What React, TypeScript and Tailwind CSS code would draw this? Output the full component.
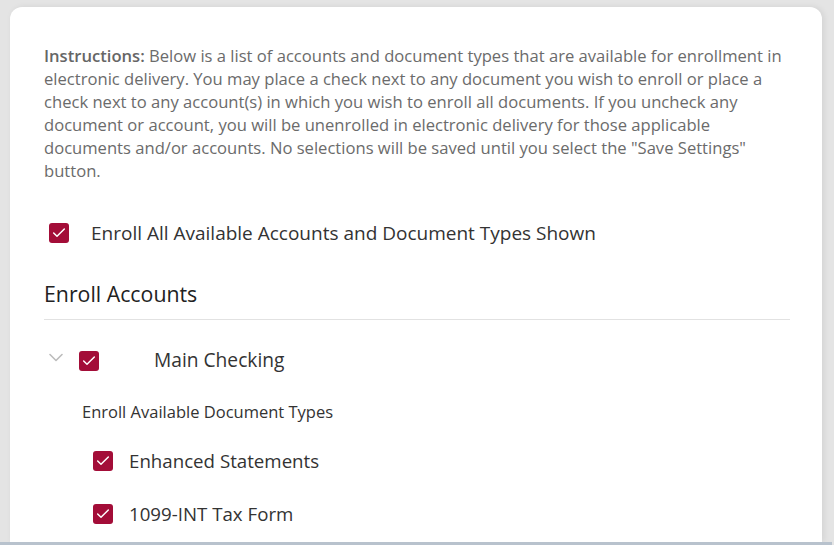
import { Check } from "lucide-react";

function Box() {
  return (
    <span className="flex h-5 w-5 shrink-0 items-center justify-center rounded-[3px] bg-[#a30d38]">
      <Check className="h-4 w-4 text-white" strokeWidth={2.2} />
    </span>
  );
}

export default function App() {
  return (
    <div className="h-[545px] overflow-hidden bg-[#e4e4e4] pl-[10px] pr-[12px] pt-[7px] font-['Open_Sans',sans-serif]">
      <div className="h-[535px] overflow-hidden rounded-t-[12px] bg-white pl-[34px] pr-[32px] pt-[37px] shadow-[2px_0_6px_rgba(0,0,0,0.08)]">
        <p className="text-[16.6px] leading-[23px] text-[#6b6b6b]">
          <span className="font-semibold text-[#666]">Instructions:</span> Below is a list of accounts and document types that are available for enrollment in electronic delivery. You may place a check next to any document you wish to enroll or place a check next to any account(s) in which you wish to enroll all documents. If you uncheck any document or account, you will be unenrolled in electronic delivery for those applicable documents and/or accounts. No selections will be saved until you select the "Save Settings" button.
        </p>

        <label className="mt-[37px] flex items-center gap-[22px] pl-[5px]">
          <Box />
          <span className="text-[19px] text-[#333]">Enroll All Available Accounts and Document Types Shown</span>
        </label>

        <h2 className="mt-[30px] pb-[10px] text-[21.3px] text-[#222] border-b border-[#e2e2e2]">Enroll Accounts</h2>

        <div className="mt-[26px] flex items-center">
          <svg className="ml-[5px] -mt-[6px]" width="14" height="9" viewBox="0 0 14 9" fill="none">
            <path d="M1 1.5 7 7.5 13 1.5" stroke="#bcbcbc" strokeWidth="1.6" strokeLinecap="round" strokeLinejoin="round" />
          </svg>
          <span className="ml-[16px]"><Box /></span>
          <span className="ml-[55px] text-[19.2px] text-[#333]">Main Checking</span>
        </div>

        <p className="mt-[25px] pl-[38px] text-[16.5px] text-[#333]">Enroll Available Document Types</p>

        <div className="mt-[22px] flex flex-col gap-[25px] pl-[49px]">
          <label className="flex items-center gap-4">
            <Box />
            <span className="text-[18.7px] text-[#333]">Enhanced Statements</span>
          </label>
          <label className="flex items-center gap-4">
            <Box />
            <span className="text-[18.7px] text-[#333]">1099-INT Tax Form</span>
          </label>
        </div>
      </div>
      <div className="-mx-[10px] h-[3px] bg-[#b8c2cd]" />
    </div>
  );
}
